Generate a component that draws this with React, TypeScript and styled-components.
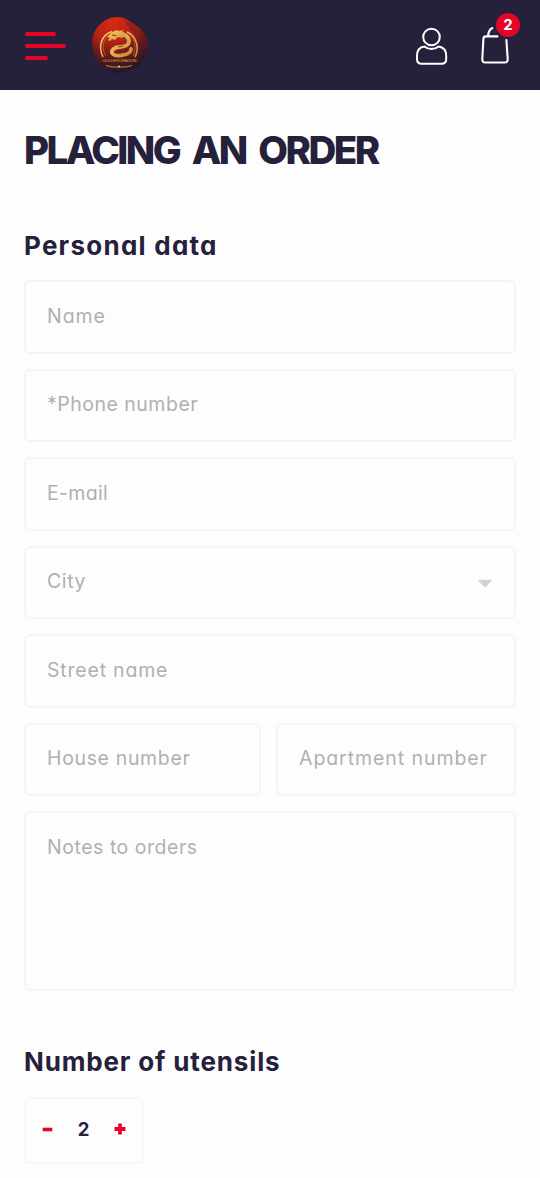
import React from "react";
import styled, { createGlobalStyle } from "styled-components";

const GlobalStyle = createGlobalStyle`
  *, *::before, *::after { box-sizing: border-box; }
  html, body { margin: 0; background: #fefdfe; }
  body {
    font-family: Inter, "Liberation Sans", sans-serif;
    font-feature-settings: "cv11" 1;
    color: #25213b;
    height: 1178px;
    overflow: hidden;
  }
  button { font: inherit; color: inherit; background: none; border: 0; padding: 0; }
`;

const Header = styled.header`
  display: flex;
  align-items: center;
  height: 90px;
  padding: 0 20px 0 25px;
  background: #25213b;
`;

const MenuButton = styled.button`
  display: flex;
  flex-direction: column;
  gap: 8px;
  width: 41px;
  margin-top: 1px;
`;

const MenuLine = styled.span<{ $width: number }>`
  height: 4px;
  width: ${(p) => p.$width}px;
  border-radius: 2px;
  background: #e50526;
`;

const Logo = styled.svg`
  display: block;
  margin-left: 26px;
`;

const Actions = styled.div`
  display: flex;
  margin-left: auto;
  height: 90px;
`;

const AccountButton = styled.button`
  display: flex;
  width: 34px;
  padding-top: 27px;
  margin-right: 30px;
`;

const BagButton = styled.button`
  position: relative;
  display: flex;
  width: 40px;
  padding-top: 25px;
`;

const Badge = styled.span`
  position: absolute;
  top: 13px;
  right: 0;
  width: 24px;
  height: 24px;
  border-radius: 50%;
  background: #e50526;
  color: #fff;
  font-size: 15px;
  font-weight: 700;
  line-height: 24px;
  text-align: center;
`;

const Main = styled.main`
  padding: 39px 24px 0;
`;

const Title = styled.h1`
  margin: 0;
  font-size: 38.5px;
  font-weight: 800;
  line-height: 42px;
  letter-spacing: -2.5px;
  word-spacing: 6.5px;
  white-space: nowrap;
`;

const SectionTitle = styled.h2<{ $spacing: number }>`
  margin: 0;
  font-size: 26px;
  font-weight: 700;
  line-height: 32px;
  letter-spacing: ${(p) => p.$spacing}px;
  white-space: nowrap;
`;

const PersonalSection = styled.section`
  padding-top: 59px;
`;

const Fields = styled.div`
  display: grid;
  grid-template-columns: 237px 240px;
  column-gap: 15px;
  row-gap: 15px;
  padding-top: 18px;
`;

const Field = styled.label<{ $half?: boolean; $tall?: boolean }>`
  display: flex;
  justify-content: space-between;
  grid-column: ${(p) => (p.$half ? "auto" : "1 / -1")};
  height: ${(p) => (p.$tall ? 180 : 73.5)}px;
  padding: 20.6px 22px 0 21px;
  border: 2px solid #f6f3f8;
  border-radius: 6px;
`;

const Placeholder = styled.span<{ $spacing: number }>`
  color: #b1afb3;
  font-size: 19.5px;
  font-weight: 400;
  line-height: 26px;
  letter-spacing: ${(p) => p.$spacing}px;
  white-space: nowrap;
`;

const Caret = styled.svg`
  margin-top: 11px;
`;

const UtensilsSection = styled.section`
  padding-top: 55px;
`;

const Stepper = styled.div`
  display: flex;
  align-items: center;
  justify-content: space-between;
  width: 120px;
  height: 67px;
  margin-top: 19px;
  padding: 0 16px 4px;
  border: 2px solid #f8f6f9;
  border-radius: 5px;
`;

const StepButton = styled.button`
  display: flex;
`;

const Count = styled.span`
  font-size: 18.5px;
  font-weight: 700;
  line-height: 24px;
`;

const fields = [
  { label: "Name", spacing: 0.95 },
  { label: "*Phone number", spacing: 0.5 },
  { label: "E-mail", spacing: 0.3 },
  { label: "City", spacing: 0.6, select: true },
  { label: "Street name", spacing: 0.8 },
  { label: "House number", spacing: 0.65, half: true },
  { label: "Apartment number", spacing: 0.93, half: true },
  { label: "Notes to orders", spacing: 0.53, tall: true },
];

function DragonLogo() {
  return (
    <Logo width="57" height="58" viewBox="0 0 57 58" aria-label="Golden Dragon">
      <defs>
        <radialGradient id="disc" cx="36%" cy="8%" r="92%">
          <stop offset="0" stopColor="#dc2a12" />
          <stop offset=".38" stopColor="#b82317" />
          <stop offset=".66" stopColor="#6c191a" />
          <stop offset="1" stopColor="#21172a" />
        </radialGradient>
        <linearGradient id="gold" x1="0" y1="0" x2="1" y2="1">
          <stop offset="0" stopColor="#f6d273" />
          <stop offset=".5" stopColor="#e3ad4a" />
          <stop offset="1" stopColor="#c98534" />
        </linearGradient>
      </defs>
      <path d="M25 1C13 1 2 11 0 24c-1 16 9 30 25 33 15 1 29-10 31-25 1-7-2-14-6-17-2-4-7-6-10-8-5-4-9-6-15-6Z" fill="url(#disc)" />
      <path d="m35 6 7 3-1 2 8 6-3 2-7-5-2-4-3-2Z" fill="#8b201e" />
      <path d="M11 41C6 31 9 19 20 15.5M35 16c9 4 13 15 8 25" fill="none" stroke="url(#gold)" strokeWidth="1.6" />
      <path d="M14 40c-5-8-3-16 3-21M38 19c6 6 6 14 3 21" fill="none" stroke="#b4702b" strokeWidth=".8" />
      <path d="M27 18c5-1 10 3 10 7s-4 6-9 6-9 3-8 6c2 4 14 3 18-1 1-1 1-2 1-3" fill="none" stroke="url(#gold)" strokeWidth="3.8" strokeLinecap="round" />
      <path d="m15 21 5-5 5-2 2 1 5-1-2 2 5 2-5 4-4-1-3 3-3-1-2 2-2-1 2-2Z" fill="url(#gold)" />
      <path d="m20 19 4 .5M31 21l3 3M26 31l5-1M24 37l5 1" stroke="#87401d" strokeWidth="1" />
      <rect x="9" y="42" width="37" height="4.6" fill="#4c1a1b" />
      <text x="27.5" y="46" textAnchor="middle" textLength="34" fill="#d49b46" fontFamily="Liberation Sans, sans-serif" fontSize="4.4">GOLDEN DRAGON</text>
      <path d="M14 49.5l6 1.5h14l6-1.5" fill="none" stroke="#c58a3c" strokeWidth="1" />
      <circle cx="27" cy="50.5" r="1.1" fill="#edc45f" />
    </Logo>
  );
}

export default function App() {
  return (
    <>
      <GlobalStyle />
      <Header>
        <MenuButton aria-label="Menu">
          <MenuLine $width={31} />
          <MenuLine $width={41} />
          <MenuLine $width={23} />
        </MenuButton>
        <DragonLogo />
        <Actions>
          <AccountButton aria-label="Account">
            <svg width="32" height="39" viewBox="0 0 32 39" fill="none" stroke="#fff" strokeWidth="2" strokeLinejoin="round">
              <circle cx="15.5" cy="10" r="8.3" />
              <path d="M8.5 19.6C3.5 20.3 1 24 1 29v3c0 3 1.7 4.8 4.6 4.8h20c3 0 4.6-1.8 4.6-4.8v-3c0-5-2.7-8.7-7.7-9.4-2 1.7-4.3 2.5-7 2.5s-5-.8-7-2.5Z" />
            </svg>
          </AccountButton>
          <BagButton aria-label="Cart">
            <svg width="30" height="40" viewBox="0 0 30 40" fill="none" stroke="#fff" strokeWidth="2.1" strokeLinecap="round" strokeLinejoin="round">
              <path d="M17.5 11.4H6c-1.7 0-2.5 1-2.6 2.5L2.3 34c-.1 2.3.8 3.5 3 3.5h19.4c2.2 0 3.1-1.2 3-3.5L26.4 15" />
              <path d="M8.2 10.5c.2-3.9 1.5-6.2 4.2-7.5" />
            </svg>
            <Badge>2</Badge>
          </BagButton>
        </Actions>
      </Header>
      <Main>
        <Title>PLACING AN ORDER</Title>
        <PersonalSection>
          <SectionTitle $spacing={1.25}>Personal data</SectionTitle>
          <Fields>
            {fields.map((f) => (
              <Field key={f.label} $half={f.half} $tall={f.tall}>
                <Placeholder $spacing={f.spacing}>{f.label}</Placeholder>
                {f.select && (
                  <Caret width="14" height="9" viewBox="0 0 14 9">
                    <path d="M1 .8h12c.8 0 .9.6.4 1.1L8 7.7c-.6.6-1.4.6-2 0L.6 1.9C.1 1.4.2.8 1 .8Z" fill="#d2d1d5" />
                  </Caret>
                )}
              </Field>
            ))}
          </Fields>
        </PersonalSection>
        <UtensilsSection>
          <SectionTitle $spacing={0.85}>Number of utensils</SectionTitle>
          <Stepper>
            <StepButton aria-label="Decrease">
              <svg width="11" height="12" viewBox="0 0 11 12"><path d="M.7 6.5h9.6" stroke="#e50526" strokeWidth="3.6" /></svg>
            </StepButton>
            <Count>2</Count>
            <StepButton aria-label="Increase">
              <svg width="12" height="12" viewBox="0 0 12 12"><path d="M.5 6h11M6 .5v11" stroke="#e50526" strokeWidth="3.8" /></svg>
            </StepButton>
          </Stepper>
        </UtensilsSection>
      </Main>
    </>
  );
}
